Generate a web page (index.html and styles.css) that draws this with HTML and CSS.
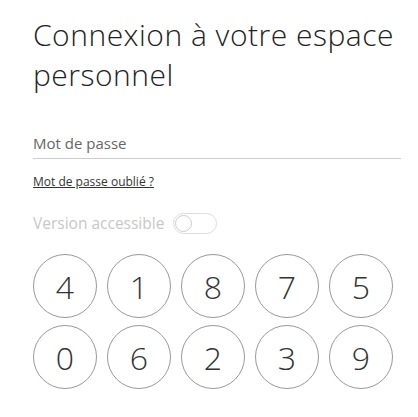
FILE: index.html
```html
<!DOCTYPE html>
<html lang="fr">
<head>
<meta charset="utf-8">
<title>Connexion</title>
<link rel="stylesheet" href="styles.css">
</head>
<body>
<main class="page">
  <h1 class="title">Connexion à votre espace personnel</h1>
  <div class="field">
    <span class="field-label">Mot de passe</span>
  </div>
  <a class="forgot" href="#">Mot de passe oublié ?</a>
  <div class="access">
    <span class="access-label">Version accessible</span>
    <span class="toggle"><span class="knob"></span></span>
  </div>
  <div class="keypad">
    <button class="key">4</button>
    <button class="key">1</button>
    <button class="key">8</button>
    <button class="key">7</button>
    <button class="key">5</button>
    <button class="key">0</button>
    <button class="key">6</button>
    <button class="key">2</button>
    <button class="key">3</button>
    <button class="key">9</button>
  </div>
</main>
</body>
</html>
```
FILE: styles.css
```css
html, body {
  margin: 0;
  padding: 0;
  background: #fff;
}
.page {
  padding: 0 17px 0 33px;
  font-family: "Open Sans", "Liberation Sans", sans-serif;
  color: #333;
}
.title {
  margin: 0;
  padding-top: 15px;
  font-weight: 300;
  font-size: 30px;
  line-height: 40px;
  color: #222;
  letter-spacing: 0.5px;
}
.field {
  margin-top: 38px;
  border-bottom: 1px solid #ccc;
  padding-bottom: 5px;
}
.field-label {
  display: block;
  font-size: 15px;
  line-height: 20px;
  color: #666;
}
.forgot {
  display: inline-block;
  margin-top: 14px;
  font-size: 12px;
  line-height: 18px;
  color: #333;
  text-decoration: underline;
}
.access {
  display: flex;
  align-items: center;
  gap: 9px;
  margin-top: 21px;
}
.access-label {
  font-size: 15.5px;
  line-height: 22px;
  color: #c8c8c8;
}
.toggle {
  display: flex;
  align-items: center;
  box-sizing: border-box;
  width: 44px;
  height: 21px;
  border: 1px solid #ddd;
  border-radius: 11px;
  padding: 1px;
}
.knob {
  display: block;
  box-sizing: border-box;
  width: 17px;
  height: 17px;
  border: 1px solid #ccc;
  border-radius: 50%;
}
.keypad {
  display: grid;
  grid-template-columns: repeat(5, 64px);
  column-gap: 10px;
  row-gap: 7px;
  margin-top: 20px;
}
.key {
  box-sizing: border-box;
  width: 64px;
  height: 64px;
  border: 1px solid #999;
  border-radius: 50%;
  background: #fff;
  padding: 0;
  font-family: "Open Sans", "Liberation Sans", sans-serif;
  font-weight: 300;
  font-size: 32px;
  color: #333;
  display: flex;
  align-items: center;
  justify-content: center;
}
```
